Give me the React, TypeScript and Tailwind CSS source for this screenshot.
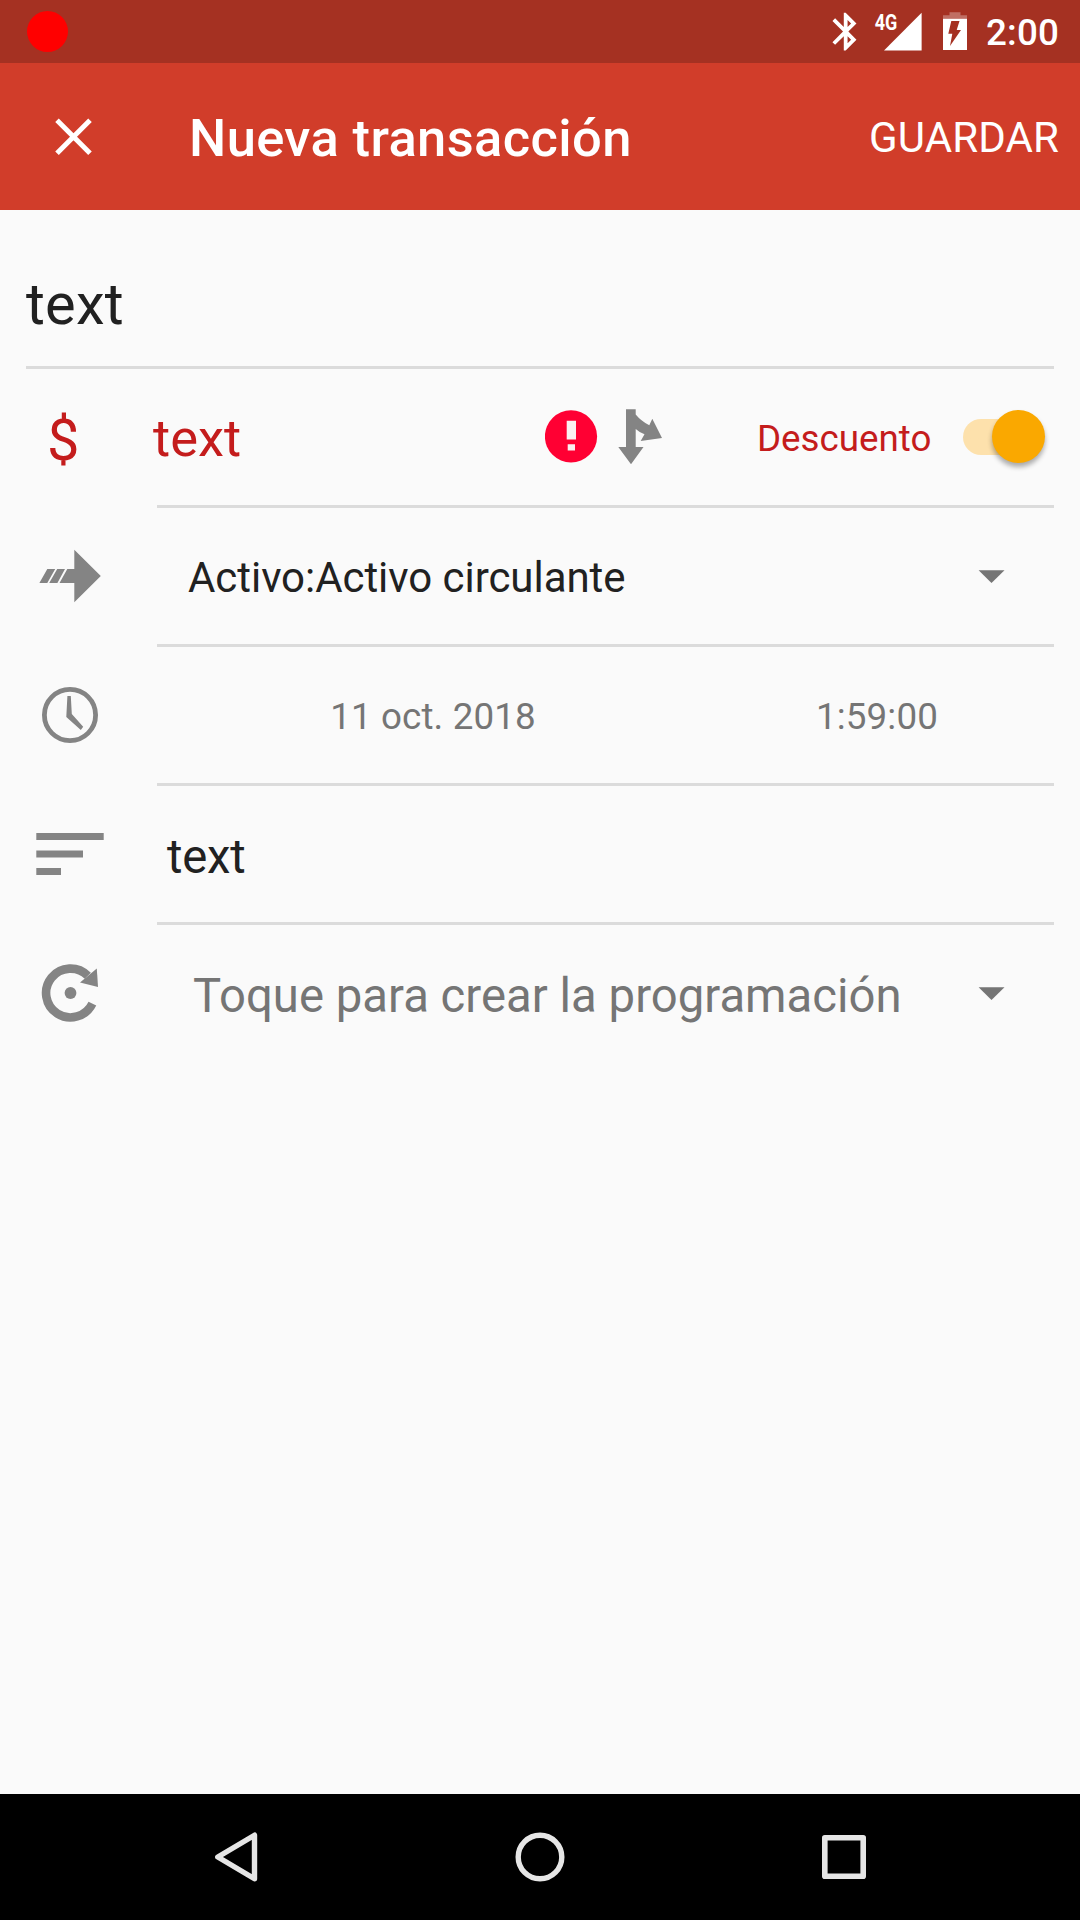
import type { ReactNode } from 'react';

const GRAY = '#848484';

function StatusBar() {
  return (
    <div className="flex h-[63px] items-start bg-[#a53122] pl-[27px] text-white">
      <div className="mt-[11px] h-[41px] w-[41px] rounded-full bg-[#ff0000]" />
      <svg className="ml-auto shrink-0" width="155" height="63" viewBox="832 0 155 63" fill="#fff">
        <path
          transform="translate(823 8.9) scale(1.89)"
          d="M17.71 7.71 12 2h-1v7.59L6.41 5 5 6.41 10.59 12 5 17.59 6.41 19 11 14.41V22h1l5.71-5.71-4.3-4.29 4.3-4.29zM13 5.83l1.88 1.88L13 9.59V5.83zm1.88 10.46L13 18.17v-3.76l1.88 1.88z"
        />
        <text x="874.8" y="29.6" fontFamily="Roboto" fontWeight="700" fontSize="22" textLength="22.6" lengthAdjust="spacingAndGlyphs">4G</text>
        <path d="M884 50.5 921.6 12.8V50.5z" />
        <path opacity=".3" d="M949.5 12.3h11v2.9h6.5v3.5h-24v-3.5h6.5z" />
        <path fillRule="evenodd" d="M943 18.7h24V50h-24zM951.3 21 959.5 21 956.7 30 961 30 950 46 952.3 33.7 948.3 33.7z" />
      </svg>
      <span className="mt-[3px] -ml-px w-[94px] whitespace-nowrap text-[36.75px] leading-[60px] font-medium tracking-[0.15px]">2:00</span>
    </div>
  );
}

function Toolbar() {
  return (
    <div className="flex h-[147px] items-start bg-[#d13d2a] text-white">
      <svg className="shrink-0" width="189" height="147" viewBox="0 63 189 147">
        <path d="M57 120.2 90 153.2M90 120.2 57 153.2" stroke="#fff" strokeWidth="5" />
      </svg>
      <h1 className="mt-[45px] whitespace-nowrap text-[52.5px] leading-[60px] font-medium tracking-[0.38px]">Nueva transacción</h1>
      <span className="mt-[45px] mr-[21px] ml-auto whitespace-nowrap text-[42px] leading-[60px] tracking-[0.12px]">GUARDAR</span>
    </div>
  );
}

function Row({ icon, children, last }: { icon: ReactNode; children: ReactNode; last?: boolean }) {
  return (
    <div className="flex h-[139px] pr-[26px] pl-[26px]">
      <div className="w-[131px] shrink-0">{icon}</div>
      <div className={last ? 'flex flex-1 items-start' : 'flex flex-1 items-start border-b-[3px] border-[#dbdbdb]'}>
        {children}
      </div>
    </div>
  );
}

function Caret() {
  return (
    <svg className="mt-[62px] mr-[49px] ml-auto shrink-0" width="27" height="14" viewBox="0 0 27 14">
      <path d="M.6.2h25.9L13.5 13.1z" fill="#757575" />
    </svg>
  );
}

export default function App() {
  return (
    <div className="flex h-[1920px] w-[1080px] flex-col bg-[#fafafa] font-['Roboto',sans-serif] text-[#212121]">
      <StatusBar />
      <Toolbar />
      <main className="flex-1">
        <div className="mx-[26px] h-[159px] border-b-[3px] border-[#dbdbdb] pt-[64px] text-[57.75px] leading-[60px] tracking-[0.2px]">text</div>

        <Row icon={<div className="pt-[41px] pl-[21px] text-[57.75px] leading-[60px] text-[#c41c1c]">$</div>}>
          <span className="mt-[39px] -ml-[4px] w-[392px] text-[52.5px] leading-[60px] text-[#c41c1c]">text</span>
          <svg className="shrink-0" width="119" height="136" viewBox="545 369 119 136">
            <circle cx="571" cy="436.4" r="26.1" fill="#ff0033" />
            <path d="M566.7 420.7h9.3v18.8h-9.3zM567.7 444.2h7.3v6.4h-7.3z" fill="#fbf0f1" />
            <path
              d="M626 409.3h9.7v5.2Q641 421 649.3 425.3L652.3 418.7 662 438 640.7 441 644.5 434.2Q639.5 432.5 635.7 429V447h7.8L631 464.3 618.3 447H626z"
              fill={GRAY}
            />
          </svg>
          <span className="mt-[40px] ml-[93px] whitespace-nowrap text-[36.75px] leading-[60px] text-[#c41c1c]">Descuento</span>
          <div className="mt-[50px] mr-[9px] ml-auto flex h-[36px] w-[82px] items-center justify-end rounded-full bg-gradient-to-r from-[#fde1ac] from-80% to-transparent to-80%">
            <div className="-mt-[1px] h-[53px] w-[53px] shrink-0 rounded-full bg-[#faa800] shadow-[0_4px_5px_rgba(0,0,0,0.32)]" />
          </div>
        </Row>

        <Row
          icon={
            <svg width="131" height="136" viewBox="26 508 131 136" fill={GRAY}>
              <path d="M39.4 583 47.3 569H55.2L47.3 583zM49.2 583 57.2 569H65L57.4 583zM59.5 583 67.3 569H74.3V549.7L100.8 576 74.3 602.3V583z" />
            </svg>
          }
        >
          <span className="mt-[40px] ml-[31px] whitespace-nowrap text-[42px] leading-[60px] tracking-[-0.05px]">Activo:Activo circulante</span>
          <Caret />
        </Row>

        <Row
          icon={
            <svg width="131" height="136" viewBox="26 647 131 136" fill={GRAY}>
              <circle cx="70" cy="715" r="25.6" fill="none" stroke={GRAY} strokeWidth="4.8" />
              <path d="M67.4 696h3.4L71.8 714 83.2 726.7 80.8 730 66.3 717z" />
            </svg>
          }
        >
          <div className="mt-[40px] flex flex-1 text-[36.75px] leading-[60px] tracking-[0.12px] text-[#757575]">
            <span className="w-[552px] text-center">11 oct. 2018</span>
            <span className="flex-1 pr-[9px] text-center">1:59:00</span>
          </div>
        </Row>

        <Row
          icon={
            <svg width="131" height="136" viewBox="26 786 131 136" fill={GRAY}>
              <path d="M36.3 833h67.4v7H36.3zM36.3 850.4H83v7.2H36.3zM36.3 868H61v7H36.3z" />
            </svg>
          }
        >
          <span className="mt-[41px] ml-[10px] text-[47.25px] leading-[60px] tracking-[-0.2px]">text</span>
        </Row>

        <Row
          last
          icon={
            <svg width="131" height="136" viewBox="26 925 131 136" fill={GRAY}>
              <path d="M87.8 975.8A24.4 24.4 0 1 0 92.4 1003.7" fill="none" stroke={GRAY} strokeWidth="8.6" />
              <path d="M96.8 968.5 98 987 80 982.5z" />
              <circle cx="70.5" cy="993" r="5.9" />
            </svg>
          }
        >
          <span className="mt-[41px] ml-[36px] whitespace-nowrap text-[47.25px] leading-[60px] tracking-[0.03px] text-[#757575]">
            Toque para crear la programación
          </span>
          <Caret />
        </Row>
      </main>

      <nav className="flex h-[126px] items-center justify-between bg-black pr-[213px] pl-[213px]">
        <svg width="46" height="52" viewBox="213 1831 46 52" fill="none" stroke="#e6e6e6" strokeWidth="5.4" strokeLinejoin="round">
          <path d="M254.5 1835.2V1878.8L217.8 1857z" />
        </svg>
        <svg width="52" height="52" viewBox="0 0 52 52" fill="none" stroke="#e6e6e6" strokeWidth="5.4">
          <circle cx="26" cy="26" r="21.8" />
        </svg>
        <svg width="46" height="46" viewBox="0 0 46 46" fill="none" stroke="#e6e6e6" strokeWidth="5.6" strokeLinejoin="round">
          <path d="M3.8 3.8h38.4v38.4H3.8z" />
        </svg>
      </nav>
    </div>
  );
}
